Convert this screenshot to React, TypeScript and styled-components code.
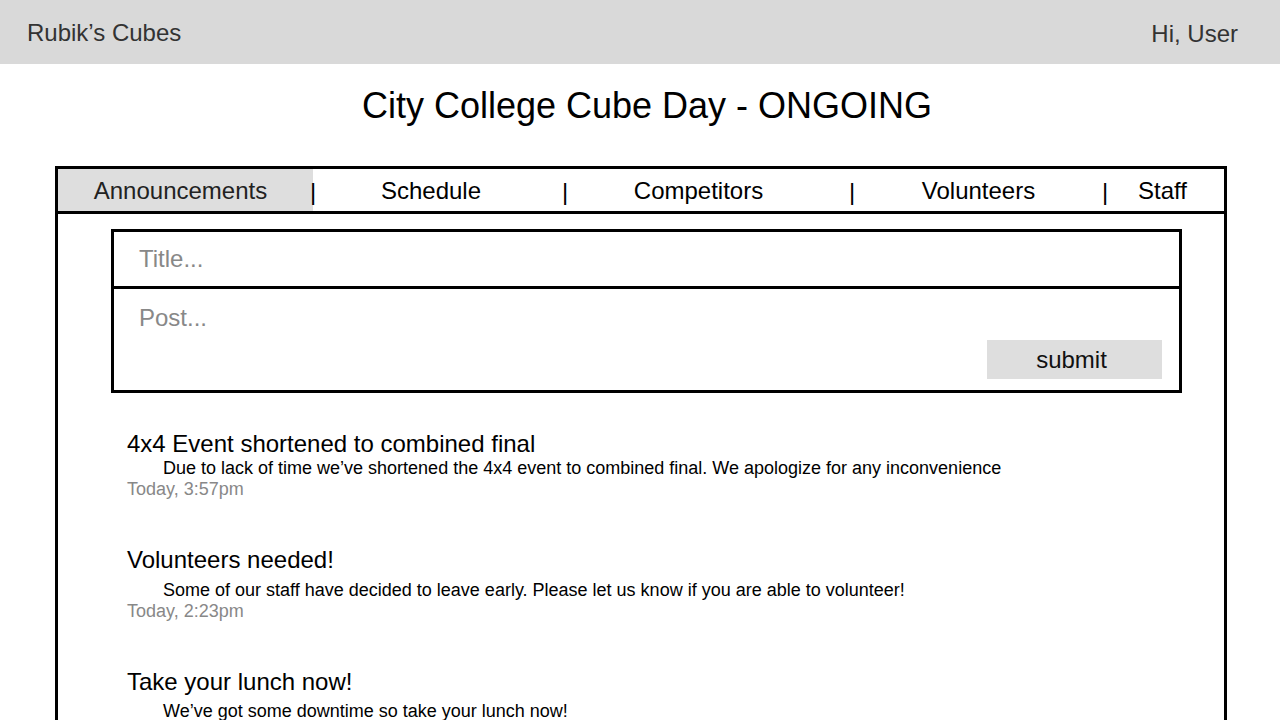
import React from "react";
import styled, { createGlobalStyle } from "styled-components";

const GlobalStyle = createGlobalStyle`
  html, body {
    margin: 0;
    padding: 0;
    background: #fff;
    font-family: "Liberation Sans", Arial, sans-serif;
    overflow: hidden;
  }
`;

const Header = styled.header`
  height: 64px;
  background: #d9d9d9;
  display: flex;
  align-items: center;
  justify-content: space-between;
  padding: 2px 42px 0 27px;
  box-sizing: border-box;
  color: #333;
  font-size: 24px;
`;

const Greeting = styled.span`
  padding-top: 2px;
`;

const PageTitle = styled.h1`
  margin: 0;
  padding: 22px 0 0 14px;
  height: 80px;
  box-sizing: border-box;
  text-align: center;
  font-size: 36px;
  font-weight: normal;
  color: #000;
  line-height: 40px;
`;

const Panel = styled.section`
  margin: 22px 53px 0 55px;
  border: 3px solid #000;
  border-bottom: none;
  min-height: 600px;
`;

const TabBar = styled.nav`
  display: flex;
  align-items: center;
  height: 42px;
  border-bottom: 3px solid #000;
  font-size: 24px;
  color: #000;
`;

// shift > 0 moves the label left, < 0 moves it right
const Tab = styled.div<{ width: number; shift?: number; active?: boolean }>`
  flex: 0 0 ${(p) => p.width}px;
  height: 100%;
  display: flex;
  align-items: center;
  justify-content: center;
  box-sizing: border-box;
  padding-top: 2px;
  padding-right: ${(p) => Math.max(0, (p.shift ?? 0) * 2)}px;
  padding-left: ${(p) => Math.max(0, -(p.shift ?? 0) * 2)}px;
  background: ${(p) => (p.active ? "#dedede" : "transparent")};
  color: ${(p) => (p.active ? "#222" : "#000")};
`;

// zero-width divider, the bar glyph sits centred on the tab boundary
const Sep = styled.span`
  flex: 0 0 0px;
  width: 0;
  min-width: 0;
  display: flex;
  justify-content: center;
  padding-top: 4px;
  position: relative;
  z-index: 1;
`;

const Body = styled.div`
  padding: 15px 42px 0 53px;
`;

const Form = styled.form`
  border: 3px solid #000;
  display: flex;
  flex-direction: column;
`;

const TitleField = styled.div`
  height: 54px;
  border-bottom: 3px solid #000;
  display: flex;
  align-items: center;
  padding: 0 25px;
  font-size: 24px;
  color: #888;
`;

const PostField = styled.div`
  height: 101px;
  box-sizing: border-box;
  padding: 17px 17px 11px 25px;
  display: flex;
  flex-direction: column;
  justify-content: space-between;
  font-size: 24px;
  color: #888;
  line-height: 24px;
`;

const SubmitButton = styled.button`
  align-self: flex-end;
  width: 175px;
  height: 39px;
  border: none;
  background: #dedede;
  font-family: inherit;
  font-size: 24px;
  color: #111;
  padding: 0 6px 0 0;
`;

const PostList = styled.div`
  padding: 38px 0 0 16px;
  display: flex;
  flex-direction: column;
`;

const Post = styled.article<{ gapAfter: number }>`
  margin-bottom: ${(p) => p.gapAfter}px;
`;

const PostTitle = styled.h2`
  margin: 0;
  font-size: 24px;
  font-weight: normal;
  line-height: 26px;
  color: #000;
`;

const PostText = styled.p<{ offset: number }>`
  margin: ${(p) => p.offset}px 0 0 36px;
  font-size: 18px;
  line-height: 20px;
  color: #000;
`;

const PostTime = styled.div`
  margin-top: 1px;
  font-size: 18px;
  line-height: 20px;
  color: #888;
`;

const tabs = [
  { label: "Announcements", width: 255, shift: 5, active: true },
  { label: "Schedule", width: 252, shift: 8 },
  { label: "Competitors", width: 287, shift: 10 },
  { label: "Volunteers", width: 253, shift: 0 },
  { label: "Staff", width: 119, shift: 2 },
];

const posts = [
  {
    title: "4x4 Event shortened to combined final",
    text: "Due to lack of time we\u2019ve shortened the 4x4 event to combined final. We apologize for any inconvenience",
    time: "Today, 3:57pm",
    offset: 1,
    gap: 48,
  },
  {
    title: "Volunteers needed!",
    text: "Some of our staff have decided to leave early. Please let us know if you are able to volunteer!",
    time: "Today, 2:23pm",
    offset: 7,
    gap: 48,
  },
  {
    title: "Take your lunch now!",
    text: "We\u2019ve got some downtime so take your lunch now!",
    time: "",
    offset: 6,
    gap: 0,
  },
];

function App() {
  return (
    <>
      <GlobalStyle />
      <Header>
        <span>Rubik’s Cubes</span>
        <Greeting>Hi, User</Greeting>
      </Header>
      <PageTitle>City College Cube Day - ONGOING</PageTitle>
      <Panel>
        <TabBar>
          {tabs.map((t, i) => (
            <React.Fragment key={t.label}>
              {i > 0 && <Sep>|</Sep>}
              <Tab width={t.width} shift={t.shift} active={t.active}>
                {t.label}
              </Tab>
            </React.Fragment>
          ))}
        </TabBar>
        <Body>
          <Form onSubmit={(e) => e.preventDefault()}>
            <TitleField>Title...</TitleField>
            <PostField>
              <span>Post...</span>
              <SubmitButton type="submit">submit</SubmitButton>
            </PostField>
          </Form>
          <PostList>
            {posts.map((p) => (
              <Post key={p.title} gapAfter={p.gap}>
                <PostTitle>{p.title}</PostTitle>
                <PostText offset={p.offset}>{p.text}</PostText>
                {p.time && <PostTime>{p.time}</PostTime>}
              </Post>
            ))}
          </PostList>
        </Body>
      </Panel>
    </>
  );
}

export default App;
